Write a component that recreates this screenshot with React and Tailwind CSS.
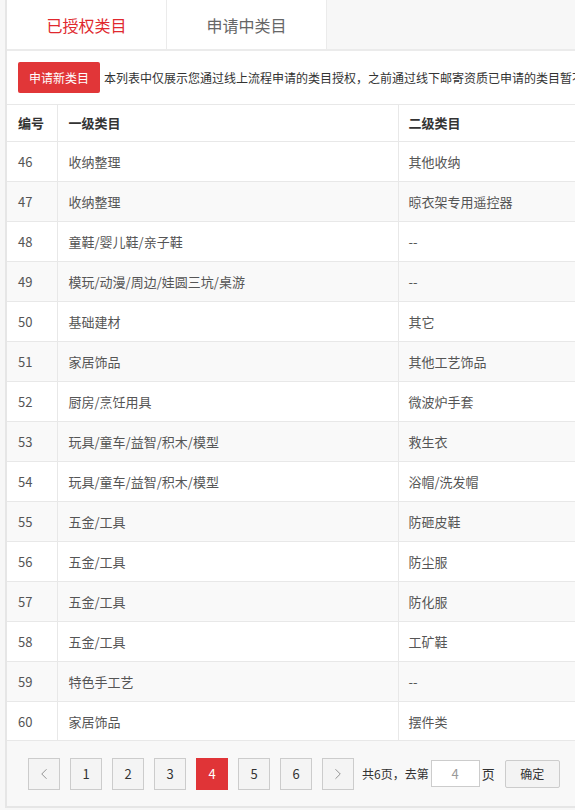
import { ChevronLeft, ChevronRight } from "lucide-react";

const rows = [
  [46, "收纳整理", "其他收纳"],
  [47, "收纳整理", "晾衣架专用遥控器"],
  [48, "童鞋/婴儿鞋/亲子鞋", "--"],
  [49, "模玩/动漫/周边/娃圆三坑/桌游", "--"],
  [50, "基础建材", "其它"],
  [51, "家居饰品", "其他工艺饰品"],
  [52, "厨房/烹饪用具", "微波炉手套"],
  [53, "玩具/童车/益智/积木/模型", "救生衣"],
  [54, "玩具/童车/益智/积木/模型", "浴帽/洗发帽"],
  [55, "五金/工具", "防砸皮鞋"],
  [56, "五金/工具", "防尘服"],
  [57, "五金/工具", "防化服"],
  [58, "五金/工具", "工矿鞋"],
  [59, "特色手工艺", "--"],
  [60, "家居饰品", "摆件类"],
];

const pages = [1, 2, 3, 4, 5, 6];

export default function App() {
  return (
    <div
      className="w-[575px] h-[810px] overflow-hidden bg-[#f7f7f7] pl-[5px]"
      style={{ fontFamily: '"Noto Sans CJK SC", "Liberation Sans", sans-serif' }}
    >
      <div className="h-[808px] flex flex-col border-l-2 border-b-2 border-[#e6e6e6] bg-white">
        {/* Tabs */}
        <div className="flex h-[49px] shrink-0 bg-[#f7f7f7]">
          <div className="w-[159px] flex items-center justify-center bg-white text-[16px] text-[#e0282e]">
            已授权类目
          </div>
          <div className="w-[161px] flex items-center justify-center bg-white border-l border-r border-[#ebebeb] text-[16px] text-[#666]">
            申请中类目
          </div>
          <div className="flex-1" />
        </div>
        <div className="h-[2px] shrink-0 bg-[#ebebeb]" />

        {/* Toolbar */}
        <div className="flex items-center h-[53px] shrink-0 pl-[11px] whitespace-nowrap overflow-hidden">
          <button className="h-[31px] w-[82px] shrink-0 rounded-[2px] bg-[#e13638] text-white text-[12px]">
            申请新类目
          </button>
          <span className="ml-[4px] text-[12px] text-[#333]">
            本列表中仅展示您通过线上流程申请的类目授权，之前通过线下邮寄资质已申请的类目暂不
          </span>
        </div>

        {/* Table */}
        <div className="flex-1 overflow-hidden">
          <table className="w-[800px] table-fixed border-collapse text-[13px]">
            <colgroup>
              <col className="w-[50px]" />
              <col className="w-[341px]" />
              <col />
            </colgroup>
            <thead>
              <tr className="h-[37px] border-t border-b border-[#e8e8e8]">
                <th className="pl-[11px] text-left font-semibold text-[#333]">编号</th>
                <th className="pl-[11px] text-left font-semibold text-[#333] border-l border-[#e8e8e8]">一级类目</th>
                <th className="pl-[10px] text-left font-semibold text-[#333] border-l border-[#e8e8e8]">二级类目</th>
              </tr>
            </thead>
            <tbody>
              {rows.map(([id, a, b], i) => (
                <tr
                  key={id}
                  className={`h-[40px] border-b border-[#e8e8e8] text-[#555] ${i % 2 === 1 ? "bg-[#f9f9f9]" : "bg-white"}`}
                >
                  <td className="pl-[11px]">{id}</td>
                  <td className="pl-[11px] border-l border-[#e8e8e8]">{a}</td>
                  <td className="pl-[10px] border-l border-[#e8e8e8]">{b}</td>
                </tr>
              ))}
            </tbody>
          </table>
        </div>

        {/* Pagination */}
        <div className="h-[66px] shrink-0 flex items-center pl-[21px] bg-[#f8f8f8] border-t border-[#e8e8e8] whitespace-nowrap">
          <div className="flex gap-[10px]">
            <button className="w-[32px] h-[32px] flex items-center justify-center border border-[#ccc] bg-[#f4f4f4] text-[#888]">
              <ChevronLeft size={18} strokeWidth={1.2} />
            </button>
            {pages.map((p) =>
              p === 4 ? (
                <button
                  key={p}
                  className="w-[32px] h-[32px] flex items-center justify-center bg-[#e03437] text-white text-[13px]"
                >
                  {p}
                </button>
              ) : (
                <button
                  key={p}
                  className="w-[32px] h-[32px] flex items-center justify-center border border-[#ccc] bg-[#f4f4f4] text-[#333] text-[13px]"
                >
                  {p}
                </button>
              )
            )}
            <button className="w-[32px] h-[32px] flex items-center justify-center border border-[#ccc] bg-[#f4f4f4] text-[#888]">
              <ChevronRight size={18} strokeWidth={1.2} />
            </button>
          </div>
          <span className="ml-[8px] text-[12px] text-[#333]">共6页，去第</span>
          <div className="ml-[2px] w-[49px] h-[27px] flex items-center justify-center border border-[#ccc] bg-white text-[13px] text-[#999]">
            4
          </div>
          <span className="ml-[2px] text-[13px] text-[#333]">页</span>
          <button className="ml-[10px] w-[55px] h-[28px] rounded-[2px] border border-[#ccc] bg-[#f3f3f3] text-[12px] text-[#333]">
            确定
          </button>
        </div>
      </div>
    </div>
  );
}
